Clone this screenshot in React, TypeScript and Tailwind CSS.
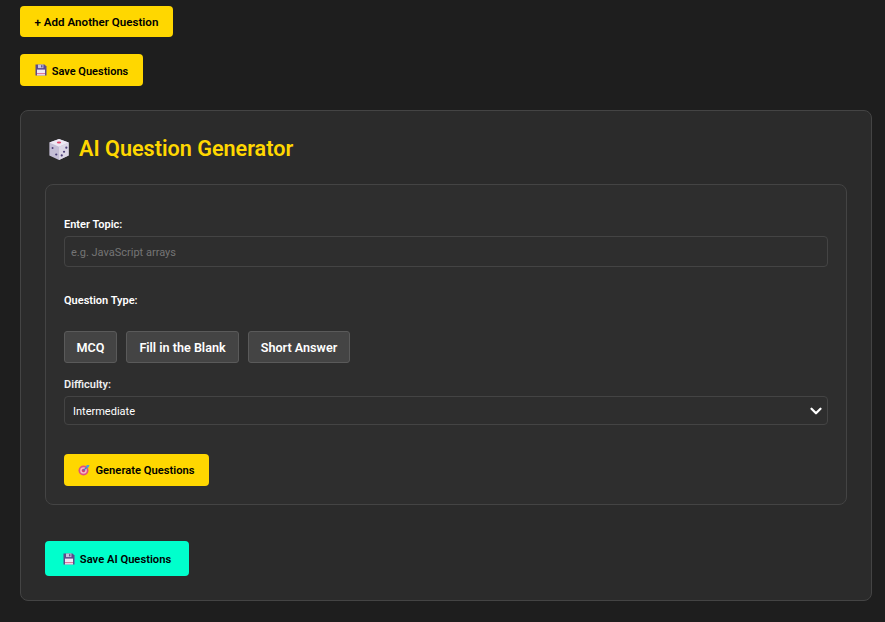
import React from 'react';
import { ChevronDown } from 'lucide-react';

const FloppyIcon = () => (
  <svg viewBox="0 0 12 12" className="w-3 h-3 shrink-0">
    <path d="M0.5 0.5h9L11.5 2.5V11.5H0.5z" fill="#5c4a8c" />
    <rect x="3" y="0.5" width="5.4" height="3.6" fill="#c9c4dc" />
    <rect x="6.2" y="1.2" width="1.2" height="2.2" fill="#4a3c78" />
    <rect x="2" y="5.6" width="8" height="5.9" fill="#efe9f5" />
    <rect x="2" y="9" width="8" height="1.2" fill="#e0789a" />
  </svg>
);

const DiceIcon = () => (
  <svg viewBox="0 0 24 24" className="-mt-[2px] w-[22px] h-[22px] shrink-0">
    <path d="M12 1 22.5 5v14L12 24 1.5 19V5z" fill="#c4bed6" />
    <path d="M12 1 22.5 5 12 9.500 1.500 5z" fill="#ece8f3" />
    <path d="M12 9.500 22.500 5v14L12 24z" fill="#dcd7e6" />
    <ellipse cx="12" cy="5" rx="2.400" ry="1.100" fill="#e2486e" />
    <circle cx="5" cy="11" r="1.100" fill="#4c3f78" />
    <circle cx="9" cy="18" r="1.200" fill="#4c3f78" />
    <circle cx="15" cy="19" r="1.200" fill="#4c3f78" />
    <circle cx="17.500" cy="15" r="1.200" fill="#4c3f78" />
    <circle cx="20" cy="10.500" r="1.200" fill="#4c3f78" />
  </svg>
);

const TargetIcon = () => (
  <svg viewBox="0 0 12 12" className="w-3 h-3 shrink-0">
    <circle cx="5.500" cy="6.500" r="5" fill="#e0507f" />
    <circle cx="5.500" cy="6.500" r="3.300" fill="#f3b6c8" />
    <circle cx="5.500" cy="6.500" r="1.700" fill="#d83c6c" />
    <path d="M5.500 6.500 10 2" stroke="#3f7fc4" strokeWidth="1.200" />
    <path d="M8.500 1h3l-1 2.500-2 .5z" fill="#4b9be0" />
  </svg>
);

const types = [
  { label: 'MCQ', width: 'w-[53px]' },
  { label: 'Fill in the Blank', width: 'w-[113px]' },
  { label: 'Short Answer', width: 'w-[102px]' },
];

export default function App() {
  return (
    <div className="min-h-[622px] bg-[#1e1e1e] pl-5 pr-[13px] pt-[6px] pb-[21px] font-['Roboto','Noto_Sans',sans-serif] overflow-hidden">
      <button className="block h-[31px] w-[153px] rounded bg-[#ffd700] pt-[3px] text-[11.6px] font-semibold text-black">
        + Add Another Question
      </button>
      <button className="mt-[17px] flex h-8 w-[123px] items-center justify-center gap-[5px] rounded bg-[#ffd700] text-[11px] font-semibold text-black">
        <FloppyIcon />
        <span className="pt-[5px]">Save Questions</span>
      </button>

      <div className="mt-6 h-[491px] rounded-lg border border-[#444] bg-[#2b2b2b] px-6 pt-[25px]">
        <h2 className="flex h-7 items-center gap-[9px] pl-[3px] text-[21.6px] font-semibold text-[#ffd700]">
          <DiceIcon />
          <span className="-mt-[2px]">AI Question Generator</span>
        </h2>

        <div className="mt-[20px] h-[321px] rounded-lg border border-[#444] bg-[#2e2e2e] px-[18px] pt-[32px]">
          <label className="block text-[11px] leading-4 font-semibold text-white">Enter Topic:</label>
          <input
            placeholder="e.g. JavaScript arrays"
            className="mt-[3px] block h-[31px] w-full rounded border border-[#444] bg-[#2e2e2e] px-[6px] pt-px text-[11px] text-white placeholder:text-[#757575]"
          />

          <label className="mt-[26px] block text-[11px] leading-4 font-semibold text-white">Question Type:</label>
          <div className="mt-[22px] flex gap-[9px]">
            {types.map(t => (
              <button
                key={t.label}
                className={`h-8 ${t.width} rounded-[3px] border border-[#5a5a5a] bg-[#444] pt-[3px] text-[12.6px] font-semibold text-white`}
              >
                {t.label}
              </button>
            ))}
          </div>

          <label className="mt-[14px] block text-[11px] leading-4 font-semibold text-[#eee]">Difficulty:</label>
          <div className="relative mt-[3px]">
            <select className="block h-[29px] w-full appearance-none rounded border border-[#444] bg-[#2e2e2e] px-2 pt-[3px] text-[11px] text-white">
              <option>Intermediate</option>
            </select>
            <ChevronDown className="pointer-events-none absolute right-[3px] top-1/2 h-[18px] w-[18px] -translate-y-1/2 text-white" strokeWidth={3} />
          </div>

          <button className="mt-[29px] flex h-8 w-[145px] items-center justify-center gap-[5px] rounded bg-[#ffd700] text-[11.2px] font-semibold text-black">
            <TargetIcon />
            <span className="pt-[3px]">Generate Questions</span>
          </button>
        </div>

        <button className="mt-9 flex h-[35px] w-[144px] items-center justify-center gap-[5px] rounded bg-[#00ffcc] text-[11.2px] font-semibold text-black">
          <FloppyIcon />
          <span className="pt-[3px]">Save AI Questions</span>
        </button>
      </div>
    </div>
  );
}
